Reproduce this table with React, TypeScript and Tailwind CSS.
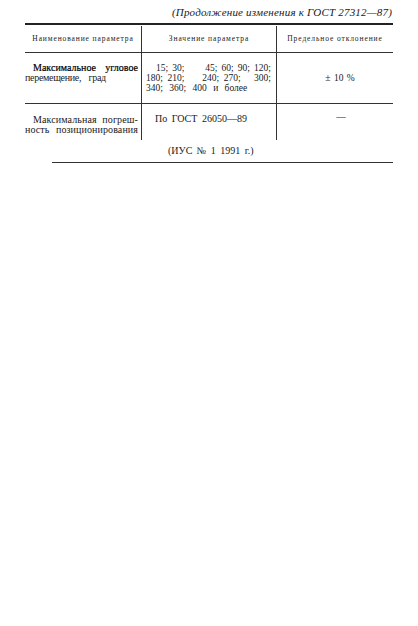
import React from "react";

const serif = "font-['Liberation_Serif','Times_New_Roman',serif]";
const just = "text-justify [text-align-last:justify]";

export default function App() {
  return (
    <div className={`relative h-[626px] w-[418px] bg-white text-[#1a1a1a] ${serif}`}>
      <div className="pr-[26px] pt-[5px] text-right text-[11px] italic leading-[14px] tracking-[0.2px]">
        (Продолжение изменения к ГОСТ 27312—87)
      </div>

      <div className="ml-[25px] mt-[4px] w-[368px]">
        {/* header */}
        <div className="grid h-[30px] grid-cols-[117px_135px_116px] border-y-2 border-t-[#222] border-b-[#333] border-b-[1.5px] pt-[1px] text-[7.5px] tracking-[0.9px]">
          <div className="flex items-center justify-center border-r border-[#333]">Наименование параметра</div>
          <div className="flex items-center justify-center border-r border-[#333]">Значение параметра</div>
          <div className="flex items-center justify-center">Предельное отклонение</div>
        </div>

        {/* row 1 */}
        <div className="grid h-[51px] grid-cols-[117px_135px_116px] border-b-[1.5px] border-[#333] text-[9.5px] leading-[10px]">
          <div className="border-r border-[#333] pr-[3px] pt-[10px] text-[10px]">
            <div className={`${just} pl-[8px] text-black [-webkit-text-stroke:0.2px_black]`}>Максимальное угловое</div>
            <div className="tracking-[-0.3px] [word-spacing:5px]">перемещение, град</div>
          </div>
          <div className="border-r border-[#333] pl-[4px] pr-[5px] pt-[10px]">
            <div className={`${just} pl-[10px]`}>15; 30;&nbsp;&nbsp;&nbsp;&nbsp;&nbsp;45; 60; 90; 120;</div>
            <div className={just}>180; 210;&nbsp;&nbsp;&nbsp;&nbsp;240; 270;&nbsp;&nbsp;&nbsp;300;</div>
            <div className="[word-spacing:4px]">340; 360; 400 и более</div>
          </div>
          <div className="flex justify-center pl-[10px] pt-[20px] [word-spacing:1px]">± 10 %</div>
        </div>

        {/* row 2 */}
        <div className="grid h-[36px] grid-cols-[117px_135px_116px] text-[9.5px] leading-[9.5px]">
          <div className="border-r border-[#333] pr-[3px] pt-[11px] text-[10px] tracking-[0.1px]">
            <div className={`${just} pl-[8px]`}>Максимальная погреш-</div>
            <div className={just}>ность позиционирования</div>
          </div>
          <div className="border-r border-[#333] pl-[13px] pt-[10px] text-[10px] [word-spacing:2px]">По ГОСТ 26050—89</div>
          <div className="flex justify-center pl-[12px] pt-[9px]">—</div>
        </div>
      </div>

      <div className="ml-[52px] w-[341px] border-b-[1.5px] border-[#333] pb-[5px] pt-[5px] text-[10px] leading-[12px]">
        <div className="pl-[116px] [word-spacing:2px]">(ИУС № 1 1991 г.)</div>
      </div>
    </div>
  );
}
